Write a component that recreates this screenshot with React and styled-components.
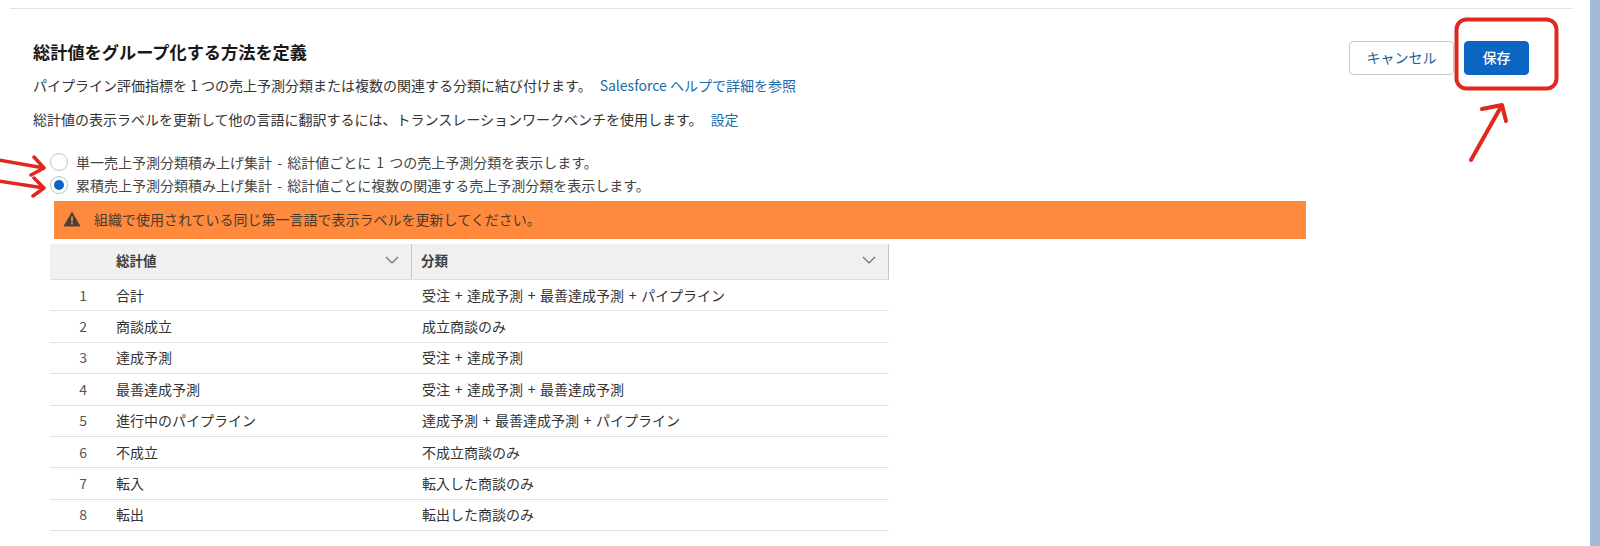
import React from 'react';
import styled, { createGlobalStyle } from 'styled-components';

const GlobalStyle = createGlobalStyle`
    html, body {
        margin: 0;
        height: 100%;
        overflow: hidden;
        background: #fff;
    }
    body {
        font-family: "Noto Sans CJK JP", "Liberation Sans", sans-serif;
        color: #303030;
    }
`;

const Shell = styled.div`
    position: relative;
    display: flex;
    width: 1600px;
    height: 546px;
    overflow: hidden;
`;

const Main = styled.main`
    flex: 1;
    padding: 8px 17px 0 10px;
`;

const SideStrip = styled.div`
    width: 10px;
    background: #a3bbd9;
`;

const Divider = styled.div`
    height: 1px;
    background: #e3e3e3;
`;

const Header = styled.header`
    display: flex;
    justify-content: space-between;
    align-items: flex-start;
    padding: 31px 44px 0 23px;
`;

const Title = styled.h2`
    margin: 0 0 11px;
    font-size: 17.2px;
    line-height: 24px;
    font-weight: 700;
    color: #181818;
`;

const Description = styled.p`
    margin: 0 0 14px;
    font-size: 14px;
    line-height: 20px;
    color: #333;
`;

const HelpLink = styled.a`
    margin-left: 8px;
    color: #1a6aa6;
    text-decoration: none;
`;

const Actions = styled.div`
    display: flex;
    gap: 10px;
    padding-top: 1px;
`;

const Button = styled.button`
    height: 34px;
    width: ${({ $primary }) => ($primary ? '65px' : '105px')};
    padding: 0 0 2px;
    border: 1px solid ${({ $primary }) => ($primary ? '#0b66c3' : '#c9c9c9')};
    border-radius: 4px;
    background: ${({ $primary }) => ($primary ? '#0b66c3' : '#fff')};
    color: ${({ $primary }) => ($primary ? '#fff' : '#1b5f96')};
    font-family: inherit;
    font-size: 14px;
    font-weight: ${({ $primary }) => ($primary ? 500 : 400)};
`;

const RadioGroup = styled.div`
    display: flex;
    flex-direction: column;
    margin-left: 40px;
    padding-top: 7px;
`;

const RadioRow = styled.label`
    display: flex;
    align-items: center;
    gap: 8px;
    height: 23px;
    font-size: 14px;
    word-spacing: 2px;
    color: #444;
`;

const RadioMark = styled.span`
    display: flex;
    align-items: center;
    justify-content: center;
    box-sizing: border-box;
    width: 18px;
    height: 18px;
    border: 1px solid #c4c4c4;
    border-radius: 50%;
    background: #fff;

    &::after {
        content: '';
        display: ${({ $checked }) => ($checked ? 'block' : 'none')};
        width: 10px;
        height: 10px;
        border-radius: 50%;
        background: #0b66c3;
    }
`;

const WarningBanner = styled.div`
    display: flex;
    align-items: center;
    gap: 13px;
    box-sizing: border-box;
    width: 1252px;
    height: 38px;
    margin: 5px 0 5px 44px;
    padding: 0 0 3px 9px;
    background: #ff8a3e;
    font-size: 14px;
    color: #4a3a2c;
`;

const Table = styled.div`
    width: 839px;
    margin-left: 40px;
`;

const HeadRow = styled.div`
    display: grid;
    grid-template-columns: 57px 305px 1fr;
    height: 36px;
    background: #f0f0f1;
    border-bottom: 1px solid #dcdcdc;
    box-sizing: border-box;
`;

const HeadCell = styled.div`
    display: flex;
    align-items: center;
    justify-content: space-between;
    box-sizing: border-box;
    padding: 0 12px 3px 9px;
    font-size: 13.5px;
    font-weight: 700;
    color: #3e3e3c;
    border-right: ${({ $edge }) => ($edge ? '1px solid #c6c6c6' : 'none')};
`;

const Row = styled.div`
    display: grid;
    grid-template-columns: 57px 306px 1fr;
    align-items: center;
    box-sizing: border-box;
    height: 31.4px;
    padding-bottom: 1px;
    border-bottom: 1px solid #e2e2e2;
    font-size: 14px;
    word-spacing: 1.5px;
    color: #333;
`;

const RowNumber = styled.div`
    padding-right: 20px;
    text-align: right;
    color: #555;
`;

const Cell = styled.div`
    padding-left: 9px;
`;

const Annotation = styled.svg`
    position: absolute;
    left: 0;
    top: 0;
    width: 1600px;
    height: 546px;
    pointer-events: none;
`;

const Chevron = () => (
    <svg width="14" height="8" viewBox="0 0 14 8" fill="none" stroke="#706e6b" strokeWidth="1.2">
        <path d="M1 1l6 6 6-6" />
    </svg>
);

const WarningIcon = () => (
    <svg width="18" height="16" viewBox="0 0 18 16">
        <path d="M9 0.5L17.6 15.5H0.4z" fill="#4d4238" />
        <rect x="8.2" y="5.5" width="1.6" height="5" fill="#ff8a3e" />
        <rect x="8.2" y="11.6" width="1.6" height="1.7" fill="#ff8a3e" />
    </svg>
);

const rows = [
    ['合計', '受注 + 達成予測 + 最善達成予測 + パイプライン'],
    ['商談成立', '成立商談のみ'],
    ['達成予測', '受注 + 達成予測'],
    ['最善達成予測', '受注 + 達成予測 + 最善達成予測'],
    ['進行中のパイプライン', '達成予測 + 最善達成予測 + パイプライン'],
    ['不成立', '不成立商談のみ'],
    ['転入', '転入した商談のみ'],
    ['転出', '転出した商談のみ'],
];

export default function App() {
    return (
        <Shell>
            <GlobalStyle />
            <Main>
                <Divider />
                <Header>
                    <div>
                        <Title>総計値をグループ化する方法を定義</Title>
                        <Description>
                            パイプライン評価指標を 1 つの売上予測分類または複数の関連する分類に結び付けます。
                            <HelpLink>Salesforce ヘルプで詳細を参照</HelpLink>
                        </Description>
                        <Description>
                            総計値の表示ラベルを更新して他の言語に翻訳するには、トランスレーションワークベンチを使用します。
                            <HelpLink>設定</HelpLink>
                        </Description>
                    </div>
                    <Actions>
                        <Button>キャンセル</Button>
                        <Button $primary>保存</Button>
                    </Actions>
                </Header>
                <RadioGroup>
                    <RadioRow>
                        <RadioMark />
                        単一売上予測分類積み上げ集計 - 総計値ごとに 1 つの売上予測分類を表示します。
                    </RadioRow>
                    <RadioRow>
                        <RadioMark $checked />
                        累積売上予測分類積み上げ集計 - 総計値ごとに複数の関連する売上予測分類を表示します。
                    </RadioRow>
                </RadioGroup>
                <WarningBanner>
                    <WarningIcon />
                    組織で使用されている同じ第一言語で表示ラベルを更新してください。
                </WarningBanner>
                <Table>
                    <HeadRow>
                        <div />
                        <HeadCell $edge>
                            総計値
                            <Chevron />
                        </HeadCell>
                        <HeadCell $edge>
                            分類
                            <Chevron />
                        </HeadCell>
                    </HeadRow>
                    {rows.map(([name, category], i) => (
                        <Row key={name}>
                            <RowNumber>{i + 1}</RowNumber>
                            <Cell>{name}</Cell>
                            <Cell>{category}</Cell>
                        </Row>
                    ))}
                </Table>
            </Main>
            <SideStrip />
            {/* hand-drawn red marks over the screenshot */}
            <Annotation viewBox="0 0 1600 546" fill="none" stroke="#e0281f" strokeLinecap="round" strokeLinejoin="round">
                <rect x="1456.5" y="19.5" width="100" height="69" rx="10" strokeWidth="4" />
                <path d="M1471 160L1502 105M1482 109L1502 105L1506 121" strokeWidth="4" />
                <path d="M-2 160L44 168M34 157L44 168L31 175" strokeWidth="3.5" />
                <path d="M-2 181L44 188M34 178L44 188L33 196" strokeWidth="3.5" />
            </Annotation>
        </Shell>
    );
}
